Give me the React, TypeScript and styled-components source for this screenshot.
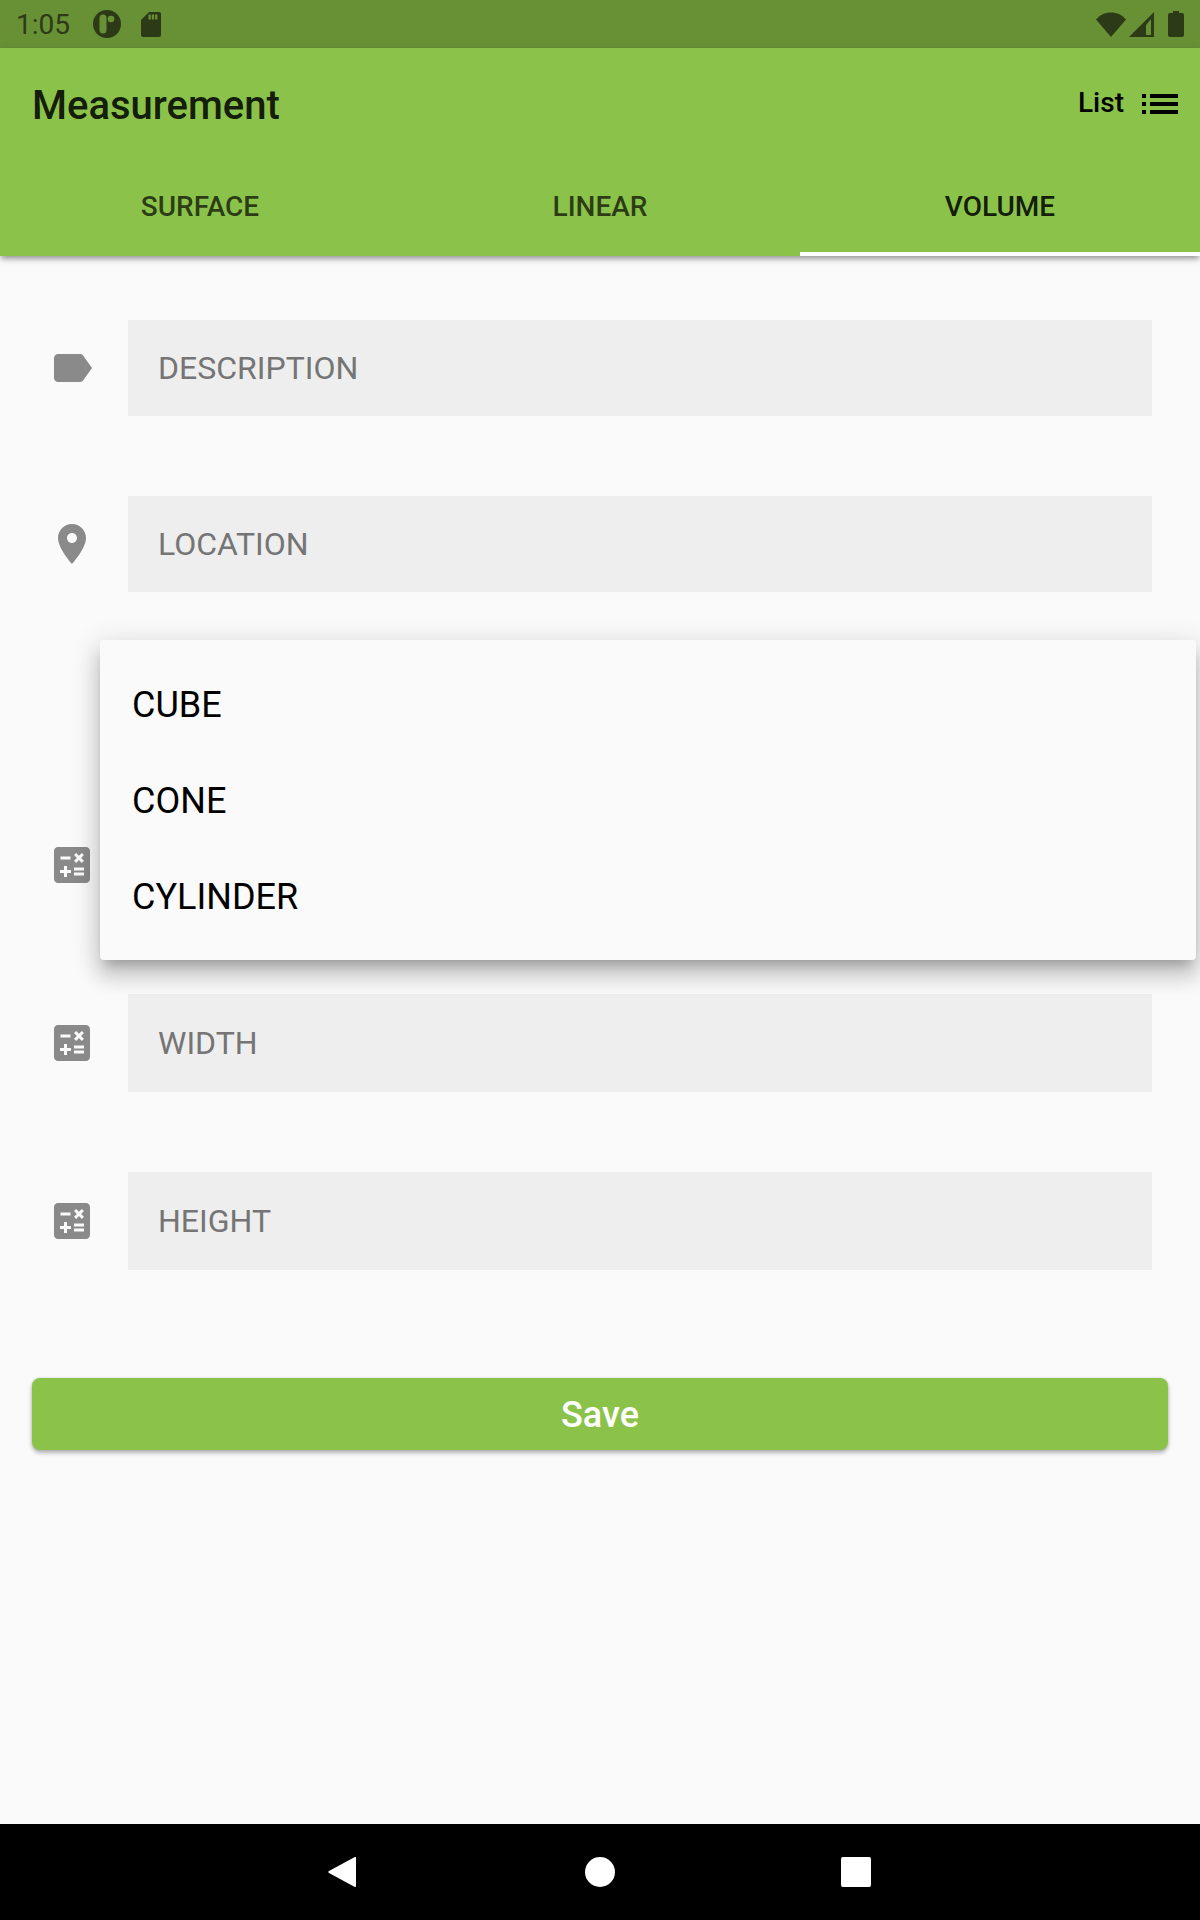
import React from 'react';
import styled, { createGlobalStyle } from 'styled-components';

const GlobalStyle = createGlobalStyle`
    html, body {
        margin: 0;
        padding: 0;
        background: #fafafa;
        font-family: Roboto, "Liberation Sans", sans-serif;
    }
`;

const Page = styled.div`
    width: 1200px;
    height: 1920px;
    display: flex;
    flex-direction: column;
    overflow: hidden;
    background: #fafafa;
`;

/* status bar */
const StatusBar = styled.div`
    height: 48px;
    flex: none;
    display: flex;
    align-items: center;
    padding: 0 16px;
    box-sizing: border-box;
    background: #689136;
    color: #2d3a17;
`;

const Time = styled.span`
    font-size: 28px;
    font-weight: 400;
    margin-right: 3px;
`;

const StatusLeft = styled.div`
    display: flex;
    align-items: center;
    gap: 20px;
`;

const StatusRight = styled.div`
    margin-left: auto;
    display: flex;
    align-items: center;
`;

const SignalIcon = styled.svg`
    margin-left: 3px;
`;

const BatteryIcon = styled.svg`
    margin-left: 13px;
`;

/* app bar */
const AppBar = styled.header`
    flex: none;
    background: #8bc34a;
    box-shadow: 0 4px 4px -2px rgba(0, 0, 0, 0.2), 0 4px 5px 0 rgba(0, 0, 0, 0.14), 0 2px 10px 0 rgba(0, 0, 0, 0.12);
    position: relative;
    z-index: 1;
`;

const Toolbar = styled.div`
    height: 112px;
    display: flex;
    align-items: center;
    padding: 0 16px 0 32px;
`;

const Title = styled.h1`
    margin: 0;
    padding-top: 2px;
    font-size: 40px;
    font-weight: 500;
    color: rgba(0, 0, 0, 0.87);
`;

const ListAction = styled.div`
    margin-left: auto;
    display: flex;
    align-items: center;
    gap: 12px;
    font-size: 28px;
    font-weight: 500;
    color: #000;
`;

const ListLabel = styled.span`
    margin-top: -4px;
`;

const Tabs = styled.div`
    height: 96px;
    display: grid;
    grid-template-columns: repeat(3, 1fr);
`;

const Tab = styled.div<{ $active?: boolean }>`
    display: flex;
    align-items: center;
    justify-content: center;
    box-sizing: border-box;
    font-size: 28px;
    font-weight: 500;
    color: ${props => (props.$active ? 'rgba(0, 0, 0, 0.87)' : 'rgba(0, 0, 0, 0.7)')};
    border-bottom: 4px solid ${props => (props.$active ? '#fff' : 'transparent')};
`;

/* form */
const Form = styled.main`
    flex: 1;
    position: relative;
    display: flex;
    flex-direction: column;
    padding-top: 64px;
`;

const Rows = styled.div`
    display: flex;
    flex-direction: column;
    gap: 80px;
    padding: 0 48px;
`;

const Row = styled.div<{ $height: number }>`
    display: flex;
    align-items: center;
    gap: 32px;
    height: ${props => props.$height}px;
`;

const IconBox = styled.svg<{ $color?: string }>`
    width: 48px;
    height: 48px;
    flex: none;
    fill: ${props => props.$color || '#8a8a8a'};
`;

const Field = styled.div`
    flex: 1;
    align-self: stretch;
    display: flex;
    align-items: center;
    padding-left: 30px;
    background: #eeeeee;
    font-size: 32px;
    color: #757575;
`;

const SaveButton = styled.button`
    display: block;
    margin: 108px 32px 0;
    padding: 2px 0 0;
    height: 72px;
    border: 0;
    border-radius: 8px;
    background: #8bc34a;
    color: #fff;
    font-family: inherit;
    font-size: 36px;
    font-weight: 500;
    box-shadow: 0 3px 4px rgba(0, 0, 0, 0.28), 0 0 3px rgba(0, 0, 0, 0.12);
`;

/* dropdown menu */
const Menu = styled.ul`
    position: absolute;
    top: 384px;
    left: 100px;
    width: 1096px;
    margin: 0;
    padding: 16px 0;
    list-style: none;
    box-sizing: border-box;
    border-radius: 4px;
    background: #fafafa;
    box-shadow: 0 10px 10px -6px rgba(0, 0, 0, 0.2), 0 16px 20px 2px rgba(0, 0, 0, 0.14), 0 6px 28px 4px rgba(0, 0, 0, 0.12);
`;

const MenuItem = styled.li`
    height: 96px;
    box-sizing: border-box;
    display: flex;
    align-items: center;
    padding: 2px 0 0 32px;
    font-size: 36px;
    color: #000;
`;

/* nav bar */
const NavBar = styled.nav`
    height: 96px;
    flex: none;
    display: flex;
    align-items: center;
    justify-content: center;
    gap: 224px;
    background: #000;
`;

const NavIcon = styled.svg`
    width: 32px;
    height: 32px;
    fill: #fff;
`;

const paths = {
    label: 'M17.63 5.84C17.27 5.33 16.67 5 16 5L5 5.01C3.9 5.01 3 5.9 3 7v10c0 1.1.9 1.99 2 1.99L16 19c.67 0 1.27-.33 1.63-.84L22 12l-4.37-6.16z',
    place: 'M12 2C8.13 2 5 5.13 5 9c0 5.25 7 13 7 13s7-7.75 7-13c0-3.87-3.13-7-7-7zm0 9.5c-1.38 0-2.5-1.12-2.5-2.5s1.12-2.5 2.5-2.5 2.5 1.12 2.5 2.5-1.12 2.5-2.5 2.5z',
    calc: 'M19 3H5c-1.1 0-2 .9-2 2v14c0 1.1.9 2 2 2h14c1.1 0 2-.9 2-2V5c0-1.1-.9-2-2-2zm-5.97 4.06L14.09 6l1.41 1.41L16.91 6l1.06 1.06-1.41 1.41 1.41 1.41-1.06 1.06-1.41-1.4-1.41 1.41-1.06-1.06 1.41-1.41-1.41-1.42zm-6.78.66h5v1.5h-5v-1.5zM11.5 16h-2v2H8v-2H6v-1.5h2v-2h1.5v2h2V16zm6.5 1.25h-5v-1.5h5v1.5zm0-2.5h-5v-1.5h5v1.5z',
    list: 'M3 13h2v-2H3v2zm0 4h2v-2H3v2zm0-8h2V7H3v2zm4 4h14v-2H7v2zm0 4h14v-2H7v2zM7 7v2h14V7H7z',
};

const FieldIcon = ({ d }: { d: string }) => (
    <IconBox viewBox="0 0 24 24">
        <path d={d} />
    </IconBox>
);

const App = () => (
    <Page>
        <GlobalStyle />
        <StatusBar>
            <StatusLeft>
                <Time>1:05</Time>
                <svg width="28" height="28" viewBox="0 0 28 28">
                    <circle cx="14" cy="14" r="14" fill="#2d3a17" />
                    <rect x="6.500" y="4.500" width="7" height="19" rx="3.500" fill="#689136" />
                    <circle cx="18" cy="9" r="3.300" fill="#689136" />
                </svg>
                <svg width="20" height="25" viewBox="0 0 20 25">
                    <path d="M8 0h10a2 2 0 0 1 2 2v21a2 2 0 0 1-2 2H2a2 2 0 0 1-2-2V8z" fill="#2d3a17" />
                    <path d="M7.500 2.500h2.300v5H7.500zM10.800 2.500h2.300v5h-2.300zM14.100 2.500h2.300v5h-2.300z" fill="#689136" />
                </svg>
            </StatusLeft>
            <StatusRight>
                <svg width="30" height="25" viewBox="0 0 30 25">
                    <path d="M0 7.500C4 3 9 0.500 15 0.500s11 2.500 15 7L15 25z" fill="#2d3a17" />
                </svg>
                <SignalIcon width="26" height="25" viewBox="0 0 26 25">
                    <path d="M0 25L25 0v25z" fill="#2d3a17" />
                    <path d="M17 13l5-6v16h-5z" fill="#689136" />
                </SignalIcon>
                <BatteryIcon width="16" height="26" viewBox="0 0 16 26">
                    <path d="M5 0h6v2h3a2 2 0 0 1 2 2v20a2 2 0 0 1-2 2H2a2 2 0 0 1-2-2V4a2 2 0 0 1 2-2h3z" fill="#2d3a17" />
                </BatteryIcon>
            </StatusRight>
        </StatusBar>
        <AppBar>
            <Toolbar>
                <Title>Measurement</Title>
                <ListAction>
                    <ListLabel>List</ListLabel>
                    <IconBox viewBox="0 0 24 24" $color="#000">
                        <path d={paths.list} />
                    </IconBox>
                </ListAction>
            </Toolbar>
            <Tabs>
                <Tab>SURFACE</Tab>
                <Tab>LINEAR</Tab>
                <Tab $active>VOLUME</Tab>
            </Tabs>
        </AppBar>
        <Form>
            <Rows>
                <Row $height={96}>
                    <FieldIcon d={paths.label} />
                    <Field>DESCRIPTION</Field>
                </Row>
                <Row $height={96}>
                    <FieldIcon d={paths.place} />
                    <Field>LOCATION</Field>
                </Row>
                <Row $height={64} />
                <Row $height={98}>
                    <FieldIcon d={paths.calc} />
                    <Field />
                </Row>
                <Row $height={98}>
                    <FieldIcon d={paths.calc} />
                    <Field>WIDTH</Field>
                </Row>
                <Row $height={98}>
                    <FieldIcon d={paths.calc} />
                    <Field>HEIGHT</Field>
                </Row>
            </Rows>
            <SaveButton>Save</SaveButton>
            <Menu>
                <MenuItem>CUBE</MenuItem>
                <MenuItem>CONE</MenuItem>
                <MenuItem>CYLINDER</MenuItem>
            </Menu>
        </Form>
        <NavBar>
            <NavIcon viewBox="0 0 32 32">
                <path d="M28 2v28a1 1 0 0 1-1.600.8L1 17a1.200 1.200 0 0 1 0-2L26.400 1.200A1 1 0 0 1 28 2z" />
            </NavIcon>
            <NavIcon viewBox="0 0 32 32">
                <circle cx="16" cy="16" r="15" />
            </NavIcon>
            <NavIcon viewBox="0 0 32 32">
                <rect x="1" y="1" width="30" height="30" rx="2" />
            </NavIcon>
        </NavBar>
    </Page>
);

export default App;
